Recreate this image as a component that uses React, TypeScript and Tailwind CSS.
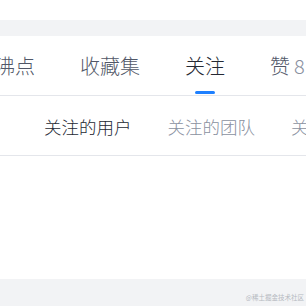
import React from 'react';

const tabs = [
  { label: '沸点' },
  { label: '收藏集' },
  { label: '关注', active: true },
  { label: '赞', count: '8' },
];

const subTabs = [
  { label: '关注的用户', active: true },
  { label: '关注的团队' },
  { label: '关注的标签' },
];

export default function App() {
  return (
    <div
      className="w-[306px] h-[306px] bg-white overflow-hidden flex flex-col"
      style={{ fontFamily: '"Noto Sans CJK SC", "Noto Sans", sans-serif' }}
    >
      {/* top spacer + gray band */}
      <div className="h-[20px] shrink-0" />
      <div className="h-[16px] shrink-0 bg-[#f2f3f5]" />

      {/* main tabs */}
      <div className="h-[60px] shrink-0 border-b border-[#e4e6eb] flex items-stretch gap-[45px] -ml-[5px] whitespace-nowrap">
        {tabs.map((t) => (
          <div key={t.label} className="relative flex items-center text-[20px] font-light leading-none">
            <span className={t.active ? 'text-[#252933]' : 'text-[#515767]'}>{t.label}</span>
            {t.count && <span className="ml-[4px] text-[#8a919f]">{t.count}</span>}
            {t.active && (
              <div className="absolute bottom-[1px] left-1/2 -translate-x-1/2 w-[20px] h-[3px] rounded-full bg-[#1e80ff]" />
            )}
          </div>
        ))}
      </div>

      {/* sub tabs */}
      <div className="h-[60px] shrink-0 border-b border-[#e4e6eb] flex items-center pl-[44px] pt-[2px] whitespace-nowrap text-[17.5px] font-light leading-none">
        {subTabs.map((s, i) => (
          <React.Fragment key={s.label}>
            {i > 0 && <div className="ml-[19px] mr-[17px] w-px h-[15px] bg-[#e4e6eb]" />}
            <span className={s.active ? 'text-[#252933]' : 'text-[#8a919f]'}>{s.label}</span>
          </React.Fragment>
        ))}
      </div>

      <div className="flex-1" />

      {/* bottom band */}
      <div className="h-[27px] shrink-0 bg-[#f2f3f5] flex items-end justify-end pr-[2px] pb-[6px]">
        <span className="text-[6.5px] leading-none text-[#b5b9c0]">@稀土掘金技术社区</span>
      </div>
    </div>
  );
}
